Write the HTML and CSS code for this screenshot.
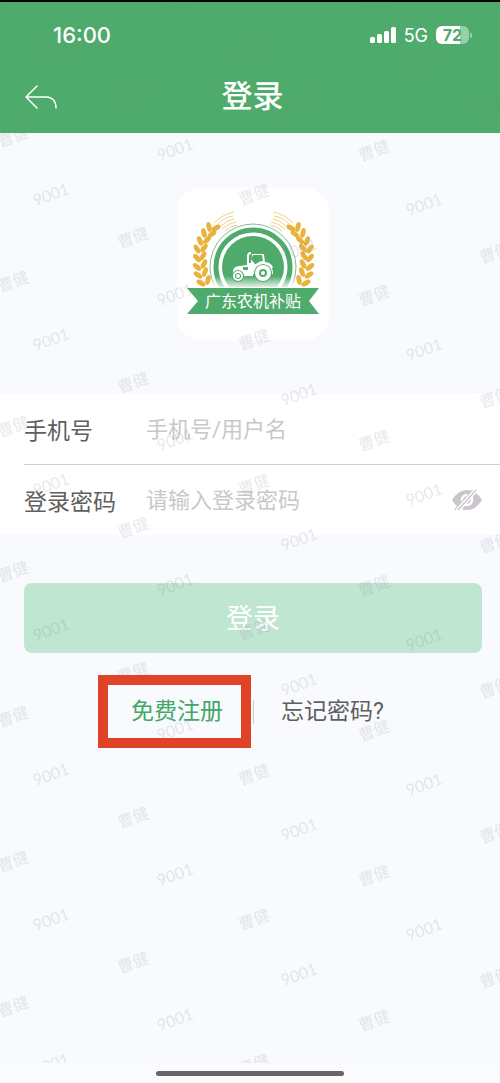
FILE: index.html
```html
<!DOCTYPE html>
<html lang="zh-CN">
<head>
    <meta charset="UTF-8">
    <meta name="viewport" content="width=device-width, initial-scale=1.0">
    <title>登录</title>
    <link rel="stylesheet" href="styles.css">
</head>
<body>
    <header class="header">
        <div class="status">
            <span class="time">16:00</span>
            <div class="status-right">
                <svg class="signal" width="26" height="16" viewBox="0 0 26 16" fill="#fff">
                    <rect x="0" y="10" width="5" height="6" rx="1.5"/>
                    <rect x="7" y="7" width="5" height="9" rx="1.5"/>
                    <rect x="14" y="4" width="5" height="12" rx="1.5"/>
                    <rect x="21" y="0" width="5" height="16" rx="1.5"/>
                </svg>
                <span class="network">5G</span>
                <div class="battery"><span class="battery-level">72</span></div>
            </div>
        </div>
        <div class="navbar">
            <button class="back" type="button" aria-label="返回">
                <svg width="32" height="24" viewBox="0 0 32 24" fill="none" stroke="#fff" stroke-width="1.5" stroke-linecap="round" stroke-linejoin="round">
                    <path d="M12 1L1 12l11 11M1 12h20c6 0 10 4 10 11"/>
                </svg>
            </button>
            <h1>登录</h1>
        </div>
    </header>

    <main>
        <div class="logo">
            <svg width="152" height="152" viewBox="0 0 152 152">
                <defs>
                    <linearGradient id="fade" x1="0" y1="0" x2="0" y2="1">
                        <stop offset="0" stop-color="#fff" stop-opacity="0"/>
                        <stop offset="1" stop-color="#fff" stop-opacity="0.9"/>
                    </linearGradient>
                    <clipPath id="top"><rect width="152" height="99"/></clipPath>
                    <g id="wheat">
                        <g fill="#e9b23c">
                            <ellipse cx="32" cy="39" rx="2.5" ry="5" transform="rotate(-14 32 39)"/>
                            <ellipse cx="39" cy="40" rx="2.5" ry="5" transform="rotate(62 39 40)"/>
                            <ellipse cx="27" cy="45" rx="2.5" ry="5" transform="rotate(-14 27 45)"/>
                            <ellipse cx="35" cy="46" rx="2.5" ry="5" transform="rotate(55 35 46)"/>
                            <ellipse cx="23" cy="53" rx="2.5" ry="5" transform="rotate(-20 23 53)"/>
                            <ellipse cx="30" cy="52" rx="2.5" ry="5" transform="rotate(45 30 52)"/>
                            <ellipse cx="20" cy="61" rx="2.5" ry="5" transform="rotate(-30 20 61)"/>
                            <ellipse cx="27" cy="60" rx="2.5" ry="5" transform="rotate(38 27 60)"/>
                            <ellipse cx="20" cy="70" rx="2.5" ry="5" transform="rotate(-42 20 70)"/>
                            <ellipse cx="26" cy="68" rx="2.5" ry="5" transform="rotate(32 26 68)"/>
                            <ellipse cx="20" cy="79" rx="2.5" ry="5" transform="rotate(-50 20 79)"/>
                            <ellipse cx="27" cy="76" rx="2.5" ry="5" transform="rotate(28 27 76)"/>
                            <ellipse cx="21" cy="87" rx="2.5" ry="5" transform="rotate(-55 21 87)"/>
                            <ellipse cx="28" cy="84" rx="2.5" ry="5" transform="rotate(20 28 84)"/>
                            <ellipse cx="24" cy="95" rx="2.5" ry="5" transform="rotate(-60 24 95)"/>
                            <ellipse cx="31" cy="92" rx="2.5" ry="5" transform="rotate(14 31 92)"/>
                        </g>
                        <path d="M37 35Q46 26 57 24M40 37Q47 29 56 28M43 39Q50 32 57 31M45 41Q52 35 59 34M48 43Q54 38 60 37" fill="none" stroke="#efcf87"/>
                    </g>
                </defs>
                <g clip-path="url(#top)">
                    <circle cx="76" cy="79" r="43" fill="none" stroke="#7cc294" stroke-width="1"/>
                    <circle cx="76" cy="79" r="37" fill="none" stroke="#4fab6b" stroke-width="5"/>
                    <circle cx="76" cy="79" r="31" fill="#4fab6b"/>
                    <rect x="30" y="88" width="92" height="12" fill="url(#fade)"/>
                </g>
                <use href="#wheat"/>
                <use href="#wheat" transform="matrix(-1 0 0 1 153 0)"/>
                <!-- tractor -->
                <path d="M56 86q-1-8 7-8l7-1v-9q0-4 4-4v2q-2 0-2 2v7h2l1-9h12l1 9q7 2 8 9v2z" fill="#fff"/>
                <path d="M76 67h9l1 6q-4 0-6 3h-2l-4-5z" fill="#4fab6b"/>
                <path d="M66 79h5v3h-5z" fill="#4fab6b"/>
                <circle cx="86" cy="85" r="9" fill="#4fab6b"/>
                <circle cx="86" cy="85" r="6" fill="none" stroke="#fff" stroke-width="4"/>
                <circle cx="86" cy="85" r="2" fill="#fff"/>
                <path d="M76 82q2-7 10-7t9 5" fill="none" stroke="#fff" stroke-width="2"/>
                <circle cx="61" cy="88" r="6" fill="#4fab6b"/>
                <circle cx="61" cy="88" r="4" fill="none" stroke="#fff" stroke-width="2"/>
                <circle cx="61" cy="88" r="2" fill="#fff"/>
                <path d="M67 83h9v5h-9z" fill="#fff"/>
                <path d="M10 100h132l-10 13 10 13H10l11-13z" fill="#4fab6b"/>
                <text class="logo-text" x="76" y="119" text-anchor="middle">广东农机补贴</text>
            </svg>
        </div>

        <form>
            <div class="fields">
                <div class="row">
                    <label for="phone">手机号</label>
                    <input type="text" id="phone" placeholder="手机号/用户名">
                </div>
                <div class="row">
                    <label for="password">登录密码</label>
                    <input type="password" id="password" placeholder="请输入登录密码">
                    <button class="eye" type="button" aria-label="显示密码">
                        <svg width="30" height="20" viewBox="0 0 30 20">
                            <path d="M0 10Q6 0 15 0t15 10Q24 20 15 20T0 10z" fill="#c9c5ca"/>
                            <circle cx="15" cy="10" r="5" fill="none" stroke="#fff" stroke-width="2.5"/>
                            <path d="M4 21L24-1" stroke="#c9c5ca" stroke-width="5"/>
                            <path d="M4 20L23-1M7 21L26 0" stroke="#fff" stroke-width="1.5"/>
                        </svg>
                    </button>
                </div>
            </div>
            <button class="submit" type="submit">登录</button>
        </form>

        <div class="links">
            <a class="register" href="#">免费注册</a>
            <a class="forgot" href="#">忘记密码?</a>
        </div>

        <svg class="watermark" aria-hidden="true">
            <defs>
                <pattern id="mark" width="605" height="145" patternUnits="userSpaceOnUse">
                    <g text-anchor="middle">
                        <text transform="translate(53 55) rotate(-20)">9001</text>
                        <text transform="translate(177 10) rotate(-20)">9001</text>
                        <text transform="translate(177 155) rotate(-20)">9001</text>
                        <text transform="translate(301 110) rotate(-20)">9001</text>
                        <text transform="translate(426 65) rotate(-20)">9001</text>
                        <text transform="translate(15 142) rotate(-20)">曹健</text>
                        <text transform="translate(15 -3) rotate(-20)">曹健</text>
                        <text transform="translate(135 98) rotate(-20)">曹健</text>
                        <text transform="translate(256 55) rotate(-20)">曹健</text>
                        <text transform="translate(376 11) rotate(-20)">曹健</text>
                        <text transform="translate(376 156) rotate(-20)">曹健</text>
                        <text transform="translate(497 113) rotate(-20)">曹健</text>
                    </g>
                </pattern>
            </defs>
            <rect class="mark-header" width="100%" height="133" fill="url(#mark)"/>
            <rect y="133" width="100%" height="100%" fill="url(#mark)"/>
        </svg>
    </main>

    <footer class="home"><div class="home-bar"></div></footer>
</body>
</html>
```
FILE: styles.css
```css
* {
    box-sizing: border-box;
}
body {
    position: relative;
    display: flex;
    flex-direction: column;
    min-height: 100vh;
    margin: 0;
    background-color: #f8fafe;
    color: #5f5f5f;
    font-family: Roboto, "Noto Sans CJK SC", sans-serif;
}
button {
    padding: 0;
    border: none;
    background: none;
    font-family: inherit;
    cursor: pointer;
}
svg {
    display: block;
}
.header {
    height: 133px;
    border-top: 2px solid #000;
    background-color: #4fab6b;
    color: #fff;
}
.status {
    display: flex;
    justify-content: space-between;
    align-items: center;
    height: 66px;
    padding: 0 31px 0 53px;
    font-family: Inter, sans-serif;
}
.time {
    font-size: 22px;
    font-weight: 500;
}
.status-right {
    display: flex;
    align-items: center;
    gap: 8px;
}
.network {
    font-size: 18px;
}
.battery {
    position: relative;
    width: 33px;
    height: 18px;
    border-radius: 6px;
    background: linear-gradient(to right, #fff 72%, #97d0a8 72%);
    color: #4fab6b;
    font-size: 16px;
    font-weight: 700;
    line-height: 18px;
    text-align: center;
}
.battery::after {
    content: "";
    position: absolute;
    top: 7px;
    right: -3px;
    width: 2px;
    height: 5px;
    border-radius: 1px;
    background-color: #97d0a8;
}
.navbar {
    display: grid;
    grid-template-columns: 32px 1fr 32px;
    align-items: center;
    height: 58px;
    padding: 0 20px 0 25px;
}
h1 {
    margin: 0;
    font-size: 31px;
    font-weight: 500;
    line-height: 44px;
    text-align: center;
}
main {
    flex: 1;
}
.logo {
    width: 152px;
    margin: 55px auto 54px;
    padding-left: 0;
    border-radius: 24px;
    background-color: #fff;
    transform: translateX(3px);
}
.logo-text {
    fill: #fff;
    font-size: 16px;
}
.fields {
    padding-left: 24px;
    background-color: #fff;
}
.row {
    display: flex;
    align-items: center;
    height: 70px;
    padding-right: 18px;
}
.row + .row {
    height: 71px;
    border-top: 1px solid #d0d0d0;
}
label {
    width: 122px;
    font-size: 23px;
}
input {
    flex: 1;
    min-width: 0;
    padding: 0;
    border: none;
    outline: none;
    background: none;
    color: #555;
    font-family: inherit;
    font-size: 22px;
}
input::placeholder {
    color: #c8c8c8;
}
.submit {
    display: block;
    width: calc(100% - 42px);
    height: 70px;
    margin: 48px 18px 0 24px;
    padding-bottom: 4px;
    border-radius: 8px;
    background-color: #bfe6d1;
    color: #fff;
    font-size: 27px;
}
.links {
    display: flex;
    align-items: center;
    margin: 22px 0 0 98px;
    font-size: 23px;
}
.links a {
    text-decoration: none;
}
.register {
    position: relative;
    z-index: 1;
    padding: 0 18px 0 23px;
    border: 10px solid #e04427;
    color: #43a866;
    line-height: 53px;
}
.forgot {
    margin-left: 2px;
    padding-left: 27px;
    border-left: 1px solid #ccc;
    color: #5f5f5f;
    line-height: 24px;
}
.watermark {
    position: absolute;
    top: 0;
    left: 0;
    width: 100%;
    height: calc(100% - 20px);
    fill: rgba(90, 95, 105, 0.14);
    font-family: Lato, "Noto Sans CJK SC", sans-serif;
    font-size: 16px;
    pointer-events: none;
}
.mark-header {
    opacity: 0.35;
}
.home {
    display: flex;
    justify-content: center;
    align-items: center;
    height: 20px;
    background-color: #fafbfd;
}
.home-bar {
    width: 188px;
    height: 5px;
    border-radius: 3px;
    background-color: #666;
}
```
